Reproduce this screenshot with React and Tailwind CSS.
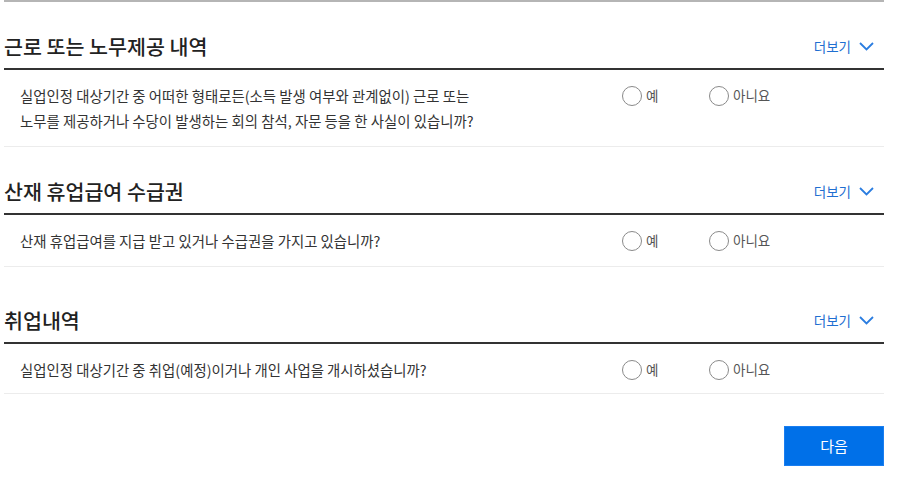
import React from "react";

const FONT = { fontFamily: '"Noto Sans CJK KR", "Noto Sans", sans-serif' };

const SECTIONS = [
  {
    title: "근로 또는 노무제공 내역",
    lines: [
      "실업인정 대상기간 중 어떠한 형태로든(소득 발생 여부와 관계없이) 근로 또는",
      "노무를 제공하거나 수당이 발생하는 회의 참석, 자문 등을 한 사실이 있습니까?",
    ],
  },
  {
    title: "산재 휴업급여 수급권",
    lines: ["산재 휴업급여를 지급 받고 있거나 수급권을 가지고 있습니까?"],
  },
  {
    title: "취업내역",
    lines: ["실업인정 대상기간 중 취업(예정)이거나 개인 사업을 개시하셨습니까?"],
    gap: true,
  },
];

function Chevron() {
  return (
    <svg width="15" height="9" viewBox="0 0 15 9" fill="none" className="ml-[8px]">
      <path d="M1 1l6.5 6.5L14 1" stroke="#2b7de0" strokeWidth="1.8" />
    </svg>
  );
}

function Radio({ label, name, width }) {
  return (
    <label className={`flex items-center ${width}`}>
      <input type="radio" name={name} className="sr-only" />
      <span className="w-[20px] h-[20px] rounded-full border border-[#8a8a8a] bg-white" />
      <span className="ml-[4px] text-[13.5px] text-[#555]">{label}</span>
    </label>
  );
}

function Section({ s, idx }) {
  return (
    <section className={s.gap ? "mt-[9px]" : ""}>
      <div className="flex items-center justify-between pt-[30px] pb-[8px] border-b-2 border-[#333]">
        <h2 className="text-[20.6px] leading-[28px] font-medium text-[#222]">
          {s.title}
        </h2>
        <button className="flex items-center mr-[10px] text-[13.5px] text-[#1f6fd1]">
          더보기
          <Chevron />
        </button>
      </div>
      <div
        className={`flex items-start border-b border-[#ececec] ${
          s.gap ? "pt-[13px] pb-[11px]" : "py-[13px]"
        }`}
      >
        <div className="w-[618px] pl-[16px] text-[14.4px] leading-[25px] text-[#333]">
          {s.lines.map((l, i) => (
            <div key={i}>{l}</div>
          ))}
        </div>
        <div className="flex items-center h-[25px]">
          <Radio label="예" name={`q${idx}`} width="w-[87px]" />
          <Radio label="아니요" name={`q${idx}`} width="" />
        </div>
      </div>
    </section>
  );
}

export default function App() {
  return (
    <div className="min-h-screen bg-white" style={FONT}>
      <div className="ml-[4px] w-[880px] border-t-2 border-[#b5b5b5]">
        {SECTIONS.map((s, i) => (
          <Section key={i} s={s} idx={i} />
        ))}
        <div className="flex justify-end mt-[32px]">
          <button className="w-[100px] h-[40px] bg-[#0070e8] border border-[#1a7ef0] text-white text-[15px]">
            다음
          </button>
        </div>
      </div>
    </div>
  );
}
